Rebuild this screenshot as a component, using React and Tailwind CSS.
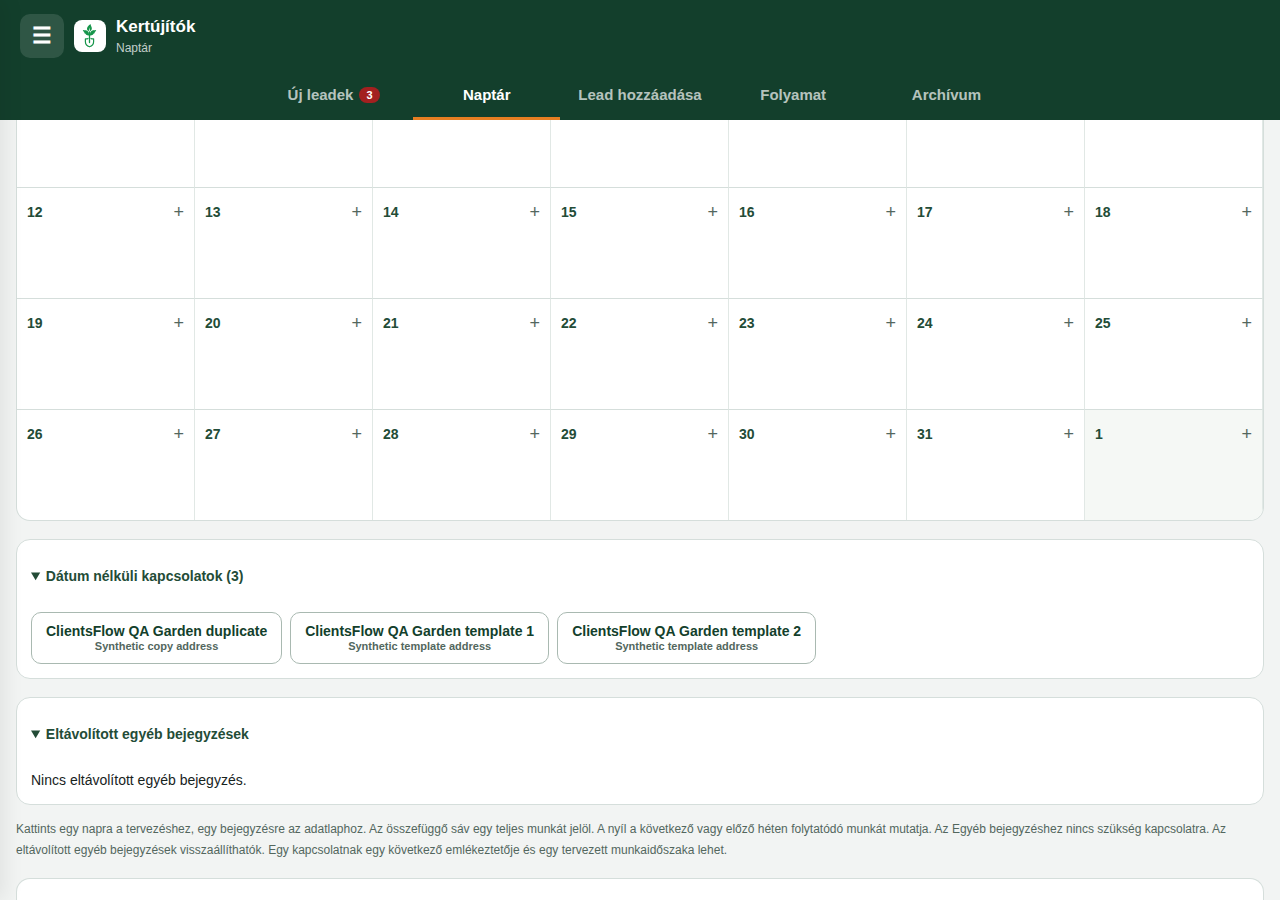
// src/App.jsx
import React from "react";

const TABS = [
    { id: "leads", label: "Új leadek", count: 3 },
    { id: "calendar", label: "Naptár" },
    { id: "add", label: "Lead hozzáadása" },
    { id: "pipeline", label: "Folyamat" },
    { id: "archive", label: "Archívum" },
];

const WEEKS = [
    [12, 13, 14, 15, 16, 17, 18],
    [19, 20, 21, 22, 23, 24, 25],
    [26, 27, 28, 29, 30, 31, 1],
];

const UNDATED = [
    { name: "ClientsFlow QA Garden duplicate", address: "Synthetic copy address" },
    { name: "ClientsFlow QA Garden template 1", address: "Synthetic template address" },
    { name: "ClientsFlow QA Garden template 2", address: "Synthetic template address" },
];

const Logo = () => (
    <svg width="32" height="32" viewBox="0 0 32 32" fill="none" aria-hidden="true">
        <path d="M16.500 4c-2.300 1.600-3.600 3.100-3.500 5 .1 1 .7 1.800 1.600 2.300l1.500-4-.4 4.200c1.600-.8 2.300-1.800 2.100-3.400-.2-1.500-1-2.300-1.300-4.100z" fill="#16954a" />
        <path d="M8.800 10c2.200.2 4.300.3 5.300 1.500.8 1 1 2.300.9 3.900-1.700.2-2.900-.3-3.500-1.600-.9-.2-1.300-.7-1.300-1.700-.8-.4-1.200-1.100-1.400-2.100z" fill="#16954a" />
        <path d="M22.200 10c-2.200.2-4.300.3-5.300 1.500-.8 1-1 2.300-.9 3.900 1.700.2 2.900-.3 3.500-1.600.9-.2 1.300-.7 1.300-1.700.8-.4 1.200-1.100 1.400-2.100z" fill="#16954a" />
        <path d="M15.500 12v10.500" stroke="#16954a" strokeWidth="1.300" strokeLinecap="round" />
        <path d="M14 18.500c-.8.500-1.600.5-2.600.3v3c0 2.400 1.800 4.300 4.100 5 2.300-.7 4.100-2.600 4.100-5v-3c-1 .2-1.800.2-2.600-.3" stroke="#16954a" strokeWidth="1.200" strokeLinecap="round" strokeLinejoin="round" />
    </svg>
);

function Header() {
    return (
        <header className="sticky top-0 z-10 bg-[#133f2c] text-white">
            <div className="flex h-[72px] items-center px-5">
                <button type="button" aria-label="Menü" className="flex size-11 items-center justify-center rounded-[10px] bg-white/12 text-[22px] leading-none font-bold">
                    ☰
                </button>
                <div className="ml-[10px] size-8 overflow-hidden rounded-lg bg-white">
                    <Logo />
                </div>
                <div className="ml-[10px]">
                    <h1 className="text-[17px] leading-6 font-bold">Kertújítók</h1>
                    <p className="text-xs leading-[18px] text-white/75">Naptár</p>
                </div>
            </div>
            <nav className="mx-auto grid h-12 max-w-[760px] grid-cols-5 gap-[6px]">
                {TABS.map((tab) => (
                    <button
                        key={tab.id}
                        type="button"
                        className={`flex items-center justify-center gap-[6px] border-b-[3px] text-[15px] leading-[17px] font-bold whitespace-nowrap ${tab.id === "calendar" ? "border-[#e67e22] text-white" : "border-transparent text-white/70"}`}
                    >
                        {tab.label}
                        {tab.count && (
                            <span className="rounded-full bg-[#a32020] px-[7px] text-[11px] leading-4 text-white">{tab.count}</span>
                        )}
                    </button>
                ))}
            </nav>
        </header>
    );
}

function DayCell({ day, outside }) {
    return (
        <div className={`h-[111px] border-t border-r border-t-[#d5dedb] border-r-[#e1e8e5] px-[10px] ${outside ? "bg-[#f5f8f5]" : ""}`}>
            <div className="flex h-12 items-center justify-between">
                <span className="text-sm font-bold text-[#234c37]">{day}</span>
                <button type="button" aria-label={`Új bejegyzés: ${day}.`} className="text-lg text-[#53675e]">
                    +
                </button>
            </div>
        </div>
    );
}

function Calendar() {
    return (
        <section className="overflow-hidden rounded-b-[14px] border border-t-0 border-[#d5dedb] bg-white">
            <div className="grid grid-cols-7">
                {WEEKS[0].map((day) => (
                    <div key={day} className="h-[67px] border-r border-[#e1e8e5]" />
                ))}
                {WEEKS.map((week) =>
                    week.map((day) => <DayCell key={`${week[0]}-${day}`} day={day} outside={day < week[0]} />)
                )}
            </div>
        </section>
    );
}

function Panel({ title, children }) {
    return (
        <details open className="mt-[18px] rounded-[14px] border border-[#d5dedb] bg-white p-[14px]">
            <summary className="mb-[14px] py-3 text-sm font-bold text-[#234c37]">{title}</summary>
            {children}
        </details>
    );
}

export default function App() {
    return (
        <div className="flex min-h-screen flex-col bg-[#f2f4f3] font-['Liberation_Sans',Arial,sans-serif] text-[#17231d]">
            {/* Closed side drawer, its shadow still falls on the left edge */}
            <aside aria-hidden="true" className="fixed inset-y-0 right-full z-20 w-72 bg-white shadow-[4px_0_20px_rgba(0,0,0,0.08)]" />

            <Header />

            <main className="flex flex-1 flex-col px-4">
                <Calendar />

                <Panel title="Dátum nélküli kapcsolatok (3)">
                    <div className="flex flex-wrap gap-2">
                        {UNDATED.map((contact) => (
                            <button
                                key={contact.name}
                                type="button"
                                className="flex flex-col items-center rounded-[10px] border border-[#a9b9b1] px-[14px] py-[10px] font-bold"
                            >
                                <span className="text-sm leading-4 text-[#133f2c]">{contact.name}</span>
                                <small className="text-[11px] leading-[14px] text-[#53675e]">{contact.address}</small>
                            </button>
                        ))}
                    </div>
                </Panel>

                <Panel title="Eltávolított egyéb bejegyzések">
                    <p className="text-sm">Nincs eltávolított egyéb bejegyzés.</p>
                </Panel>

                <p className="mt-[14px] text-xs leading-[21px] text-[#53675e]">
                    Kattints egy napra a tervezéshez, egy bejegyzésre az adatlaphoz. Az összefüggő sáv egy teljes munkát jelöl. A nyíl a következő vagy előző héten folytatódó munkát mutatja. Az Egyéb bejegyzéshez nincs szükség kapcsolatra. Az eltávolított egyéb bejegyzések visszaállíthatók. Egy kapcsolatnak egy következő emlékeztetője és egy tervezett munkaidőszaka lehet.
                </p>

                <section className="mt-[17px] flex-1 rounded-t-[14px] border border-b-0 border-[#d5dedb] bg-white" />
            </main>
        </div>
    );
}
